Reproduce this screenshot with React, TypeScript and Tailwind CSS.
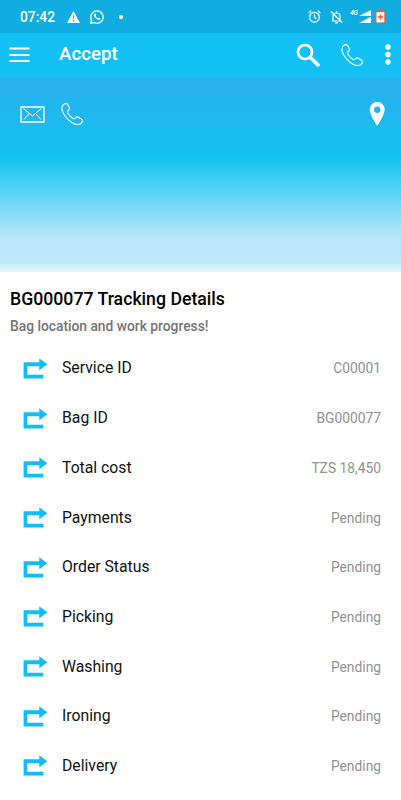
import React from "react";

const FONT = "font-[Roboto,'Liberation_Sans',sans-serif]";

const details = [
  { label: "Service ID", value: "C00001" },
  { label: "Bag ID", value: "BG000077" },
  { label: "Total cost", value: "TZS 18,450" },
  { label: "Payments", value: "Pending" },
  { label: "Order Status", value: "Pending" },
  { label: "Picking", value: "Pending" },
  { label: "Washing", value: "Pending" },
  { label: "Ironing", value: "Pending" },
  { label: "Delivery", value: "Pending" },
];

function PhoneIcon({ className = "" }: { className?: string }) {
  return (
    <svg className={className} width="23" height="23" viewBox="0 0 23 23" fill="none" stroke="white" strokeWidth="1.1">
      <path d="M3 1.2C4.5.2 6.3.4 7 2l1.3 2.7C8.9 6.2 8 7.2 6.8 8c-.6.6-.4 1.5.4 2.8 1.4 2.1 2.8 3.5 4.6 4.6 1.2.6 1.7.4 2.4-.4 1-1.2 2-1.6 3.3-.8l2.8 1.8c1.5 1 1.5 2.6.3 3.8-2 2.2-5.2 2-8 .6C7.8 18 3.6 13.4 1.6 8.6.4 5.6.6 2.8 3 1.2Z" />
    </svg>
  );
}

function StatusBar() {
  return (
    <div className="flex h-[33px] items-center bg-[#0fade0] pl-5 pr-[15px] text-white">
      <span className="mt-[2px] w-[36px] text-[13.8px] font-medium leading-none">07:42</span>
      <svg className="ml-[11px]" width="13" height="12" viewBox="0 0 13 12">
        <path d="M6.5 0 13 12H0Z" fill="white" />
        <path d="M6.5 4.3v3.5M6.5 9v1.4" stroke="#0fade0" strokeWidth="1.3" />
      </svg>
      <svg className="ml-[10px]" width="14" height="14" viewBox="0 0 14 14" fill="none" stroke="white">
        <path d="m.7 13.3.9-3.2A6.2 6.2 0 1 1 4 12.5Z" strokeWidth="1.3" />
        <path d="M4.6 3.6c-.9.7-.8 1.8-.2 2.9.9 1.7 2.1 2.7 3.9 3.3 1 .3 2-.2 2.1-1.4L8.8 7.6l-.8.9C6.8 8 6 7.2 5.5 6.1l.7-.8-.7-1.7Z" fill="white" stroke="none" />
      </svg>
      <span className="ml-[15px] h-1 w-1 rounded-full bg-white" />
      <div className="ml-auto flex items-center">
        <svg width="13" height="13" viewBox="0 0 13 13" fill="none" stroke="white" strokeWidth="1.2">
          <circle cx="6.5" cy="7.2" r="4.9" />
          <path d="M6.5 4.5v3l2 1.2M.6 3.1 3.2.8M12.4 3.1 9.8.8" />
        </svg>
        <svg className="ml-[9px]" width="13" height="14" viewBox="0 0 13 14" fill="none" stroke="white" strokeWidth="1.2">
          <path d="M2 11h9M3 11V6.2C3 4.2 4.4 3 6.5 3S10 4.2 10 6.2V11M6.5 3V1" />
          <path d="M5.2 12.8h2.6" strokeWidth="1.5" />
          <path d="m.8 1.5 11.4 11" />
        </svg>
        <span className="mb-[6px] ml-[7px] w-[9px] text-[7px] font-medium italic leading-none tracking-[-0.5px]">4G</span>
        <svg width="12" height="13" viewBox="0 0 12 13" fill="white">
          <path d="M12 0v6H0ZM12 6.8V13H0Z" />
        </svg>
        <svg className="ml-[4px]" width="11" height="15" viewBox="0 0 11 15">
          <path d="M2.8 0h5v2h2.7v12.5H.3V2h2.5Z" fill="#f25b36" />
          <path d="M1.5 3.2h7.8v10.2H1.5Z" fill="white" />
          <path d="M5.4 5.5v5.2M2.8 8.1H8" stroke="#f25b36" strokeWidth="1.5" />
        </svg>
      </div>
    </div>
  );
}

function AppBar() {
  return (
    <header className="flex h-11 items-center bg-[#12c0f5] pl-[9px] pr-[10.5px] text-white">
      <svg width="21" height="16" viewBox="0 0 21 16" stroke="white" strokeWidth="1.9">
        <path d="M.5 1.5h20M.5 8h20M.5 14h20" />
      </svg>
      <h1 className="mb-[2px] ml-[29px] text-[18.7px] font-medium leading-none">Accept</h1>
      <svg className="ml-auto" width="25" height="25" viewBox="0 0 25 25" fill="none" stroke="white">
        <circle cx="9" cy="9" r="7" strokeWidth="2.7" />
        <path d="m14 14 9 9" strokeWidth="3.7" />
      </svg>
      <PhoneIcon className="ml-5" />
      <svg className="ml-[21px]" width="6" height="22" viewBox="0 0 6 22" fill="white">
        <circle cx="3" cy="3" r="2.7" />
        <circle cx="3" cy="10.5" r="2.7" />
        <circle cx="3" cy="18" r="2.7" />
      </svg>
    </header>
  );
}

function Hero() {
  return (
    <div className="flex h-[195px] items-start bg-[linear-gradient(to_bottom,#2bafed_0%,#12c2f0_41.5%,#25c8f1_46%,#bee8f9_84%,#bee8f9_95%,#e3f5fc_99%,#e3f5fc_100%)] pl-5 pr-4 pt-[25px]">
      <svg className="mt-1" width="25" height="17" viewBox="0 0 25 17" fill="none" stroke="white">
        <path d="M1 1h23v15H1Z" strokeWidth="1.3" />
        <path d="m3.5 2.5 9 7.5 9-7.5M4 13.5 9 8M21 13.5 16 8" strokeWidth="1" />
      </svg>
      <PhoneIcon className="ml-4 mt-[1px]" />
      <svg className="ml-auto" width="16" height="25" viewBox="0 0 16 25">
        <path d="M8.2 0a7.4 7.4 0 0 1 7.4 7.7C15.6 12 11.7 18.5 8.2 24 4.7 18.5.8 12 .8 7.7A7.4 7.4 0 0 1 8.2 0Zm0 4.500a3.200 3.200 0 1 0 0 6.400 3.200 3.200 0 0 0 0-6.400Z" fill="white" fillRule="evenodd" />
      </svg>
    </div>
  );
}

function DetailRow({ label, value }: { label: string; value: string }) {
  return (
    <li className="flex h-[49.7px] items-center pl-[23px] pr-5">
      <svg width="25" height="21" viewBox="0 0 25 21">
        <path d="M.6 4.3h15.7v-4l8 6-8 6V8.2h-12v8.600h16v3.700H.6Z" fill="#10bdf5" />
      </svg>
      <span className="ml-[14px] text-[15.75px] leading-5 text-[#111]">{label}</span>
      <span className="ml-auto text-[13.8px] leading-5 text-[#919191]">{value}</span>
    </li>
  );
}

export default function App() {
  return (
    <div className={`h-[800px] w-[401px] overflow-hidden bg-white ${FONT}`}>
      <StatusBar />
      <AppBar />
      <Hero />
      <main>
        <div className="pl-[10px] pt-[15px]">
          <h2 className="text-[17.7px] font-medium leading-6 text-black">BG000077 Tracking Details</h2>
          <p className="mt-[5px] text-[13.8px] font-medium leading-5 text-[#747474]">Bag location and work progress!</p>
        </div>
        <ul className="mt-[7.6px]">
          {details.map((row) => (
            <DetailRow key={row.label} {...row} />
          ))}
        </ul>
      </main>
    </div>
  );
}
